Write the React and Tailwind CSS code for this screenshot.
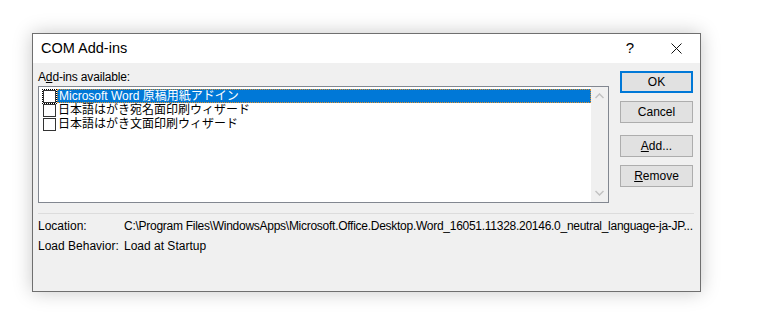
import React from "react";

const font = { fontFamily: '"Liberation Sans", "Noto Sans CJK JP", sans-serif' };

function Check({ focus }) {
  return (
    <div className="w-[14px] h-[14px] flex items-center justify-center shrink-0">
      <div
        className={
          "w-[13px] h-[13px] bg-white border border-[#333333] " +
          (focus ? "outline outline-1 outline-dotted outline-[#000000] outline-offset-[0px]" : "")
        }
      />
    </div>
  );
}

function Row({ text, selected }) {
  return (
    <div className="flex items-center h-[14px] pl-[3px]">
      <Check focus={selected} />
      <div
        className={
          "ml-[1px] flex-1 h-[14px] flex items-center pl-[1px] text-[12px] leading-[12px] whitespace-nowrap overflow-hidden " +
          (selected
            ? "bg-[#0078d7] text-white border border-dotted border-[#e0902a]"
            : "text-black")
        }
      >
        {text}
      </div>
    </div>
  );
}

function Btn({ children, primary }) {
  return (
    <div
      className={
        "w-[73px] h-[22px] flex items-center justify-center bg-[#e1e1e1] text-[12px] text-black " +
        (primary ? "border-2 border-[#0078d7]" : "border border-[#adadad]")
      }
    >
      {children}
    </div>
  );
}

export default function App() {
  return (
    <div className="w-[765px] h-[325px] bg-white pl-[32px] pt-[33px]" style={font}>
      <div className="w-[669px] h-[259px] border border-[#6f6f6f] bg-[#f0f0f0] flex flex-col shadow-[0_0_18px_rgba(0,0,0,0.22)]">
        {/* Title bar */}
        <div className="h-[29px] bg-white flex items-center shrink-0">
          <div className="pl-[8px] text-[14.5px] text-black flex-1">COM Add-ins</div>
          <div className="w-[46px] text-center text-[15px] text-black">?</div>
          <div className="w-[46px] h-[29px] flex items-center justify-center mr-[1px]">
            <svg width="11" height="11" viewBox="0 0 11 11">
              <path d="M0.5 0.5 L10.5 10.5 M10.5 0.5 L0.5 10.5" stroke="#111" strokeWidth="1" />
            </svg>
          </div>
        </div>

        {/* Body */}
        <div className="flex-1 flex flex-col pl-[5px] pr-[7px] pt-[7px]">
          <div className="flex gap-[11px]">
            <div className="w-[571px] flex flex-col">
              <div className="h-[16px] text-[12px] text-black leading-[14px] tracking-[-0.15px]">
                A<span className="underline">d</span>d-ins available:
              </div>
              <div className="h-[117px] border border-[#828790] bg-white flex">
                <div className="flex-1 pt-[2px]">
                  <Row selected text="Microsoft Word 原稿用紙アドイン" />
                  <Row text="日本語はがき宛名面印刷ウィザード" />
                  <Row text="日本語はがき文面印刷ウィザード" />
                </div>
                <div className="w-[17px] bg-[#f0f0f0] flex flex-col items-center justify-between py-[6px]">
                  <svg width="9" height="6" viewBox="0 0 9 6">
                    <path d="M0.5 5 L4.5 1 L8.5 5" stroke="#c2c2c2" strokeWidth="1.5" fill="none" />
                  </svg>
                  <svg width="9" height="6" viewBox="0 0 9 6">
                    <path d="M0.5 1 L4.5 5 L8.5 1" stroke="#c2c2c2" strokeWidth="1.5" fill="none" />
                  </svg>
                </div>
              </div>
            </div>
            <div className="flex flex-col pt-[1px]">
              <Btn primary>OK</Btn>
              <div className="mt-[8px]">
                <Btn>Cancel</Btn>
              </div>
              <div className="mt-[12px]">
                <Btn>
                  <span className="underline">A</span>dd...
                </Btn>
              </div>
              <div className="mt-[8px]">
                <Btn>
                  <span className="underline">R</span>emove
                </Btn>
              </div>
            </div>
          </div>

          <div className="mt-[10px] h-px bg-[#dcdcdc] mr-[-1px]" />

          <div className="mt-[2px] flex text-[12px] text-black h-[20px] items-center">
            <div className="w-[86px] shrink-0">Location:</div>
            <div className="flex-1 whitespace-nowrap overflow-hidden tracking-[-0.27px]">
              C:\Program Files\WindowsApps\Microsoft.Office.Desktop.Word_16051.11328.20146.0_neutral_language-ja-JP...
            </div>
          </div>
          <div className="flex text-[12px] text-black h-[20px] items-center">
            <div className="w-[86px] shrink-0">Load Behavior:</div>
            <div className="flex-1">Load at Startup</div>
          </div>
        </div>
      </div>
    </div>
  );
}
